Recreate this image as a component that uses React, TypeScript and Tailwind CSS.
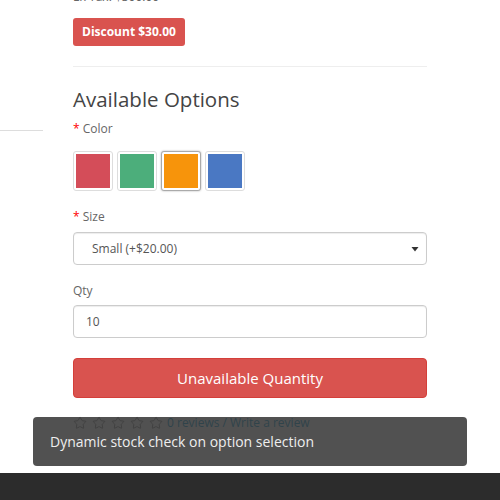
import { Star } from "lucide-react";

const swatches = [
  { color: "bg-[#d44d59]", selected: false },
  { color: "bg-[#4cae7b]", selected: false },
  { color: "bg-[#f7940b]", selected: true },
  { color: "bg-[#4a78c3]", selected: false },
];

export default function App() {
  return (
    <div
      className="relative h-[500px] w-[500px] overflow-hidden bg-white flex flex-col text-[12px] text-[#666]"
      style={{ fontFamily: '"Open Sans", "Liberation Sans", sans-serif' }}
    >
      <div className="flex-1 flex">
        {/* left column edge */}
        <div className="w-[43px] shrink-0">
          <div className="mt-[130px] border-t border-[#ddd]" />
        </div>

        {/* product options */}
        <div className="ml-[30px] w-[354px] flex flex-col">
          <p className="mt-[-12px] leading-[18px] text-[#666]">Ex Tax: $300.00</p>
          <div className="mt-[12px]">
            <span className="inline-flex h-[28px] items-center rounded-[3px] bg-[#d9534f] px-[9px] text-[12px] font-bold text-white">
              Discount $30.00
            </span>
          </div>
          <div className="mt-[20px] border-t border-[#eee]" />

          <h3 className="mt-[19px] text-[20.5px] leading-[26px] text-[#444]">Available Options</h3>

          <label className="mt-[8px] leading-[18px]">
            <span className="text-[#f00]">*</span> Color
          </label>
          <div className="mt-[13px] flex gap-[4px]">
            {swatches.map((s, i) => (
              <div
                key={i}
                className={`h-[40px] w-[40px] rounded-[3px] border bg-white p-[2px] ${
                  s.selected ? "border-[#aaa] shadow-[0_0_2px_rgba(0,0,0,0.35)]" : "border-[#ddd]"
                }`}
              >
                <div className={`h-full w-full ${s.color}`} />
              </div>
            ))}
          </div>

          <label className="mt-[17px] leading-[18px]">
            <span className="text-[#f00]">*</span> Size
          </label>
          <div className="mt-[6px] flex h-[33px] items-center justify-between rounded-[4px] border border-[#ccc] pl-[18px] pr-[6px] text-[#555] shadow-[inset_0_1px_1px_rgba(0,0,0,0.075)]">
            <span>Small (+$20.00)</span>
            <svg width="10" height="8" viewBox="0 0 10 8">
              <path d="M1.5 2h7L5 6.5z" fill="#333" />
            </svg>
          </div>

          <label className="mt-[17px] leading-[18px]">Qty</label>
          <div className="mt-[5px] flex h-[33px] items-center rounded-[4px] border border-[#ccc] px-[12px] text-[#555] shadow-[inset_0_1px_1px_rgba(0,0,0,0.075)]">
            10
          </div>

          <button className="mt-[20px] h-[40px] rounded-[4px] border border-[#d43f3a] bg-[#d9534f] text-[15px] text-white">
            Unavailable Quantity
          </button>

          <div className="mt-[16px] flex items-center leading-[18px]">
            <div className="flex gap-[5px]">
              {[0, 1, 2, 3, 4].map((i) => (
                <Star key={i} size={14} strokeWidth={1.6} className="text-[#888]" />
              ))}
            </div>
            <span className="ml-[4px] text-[#23a1d1]">0 reviews / Write a review</span>
          </div>
        </div>
      </div>

      <footer className="h-[27px] bg-[#2c2c2c]" />

      {/* notification toast */}
      <div className="absolute left-[33px] top-[417px] flex h-[49px] w-[434px] items-center rounded-[4px] bg-[#333]/85 px-[17px] text-[14px] text-[#eee]">
        Dynamic stock check on option selection
      </div>
    </div>
  );
}
